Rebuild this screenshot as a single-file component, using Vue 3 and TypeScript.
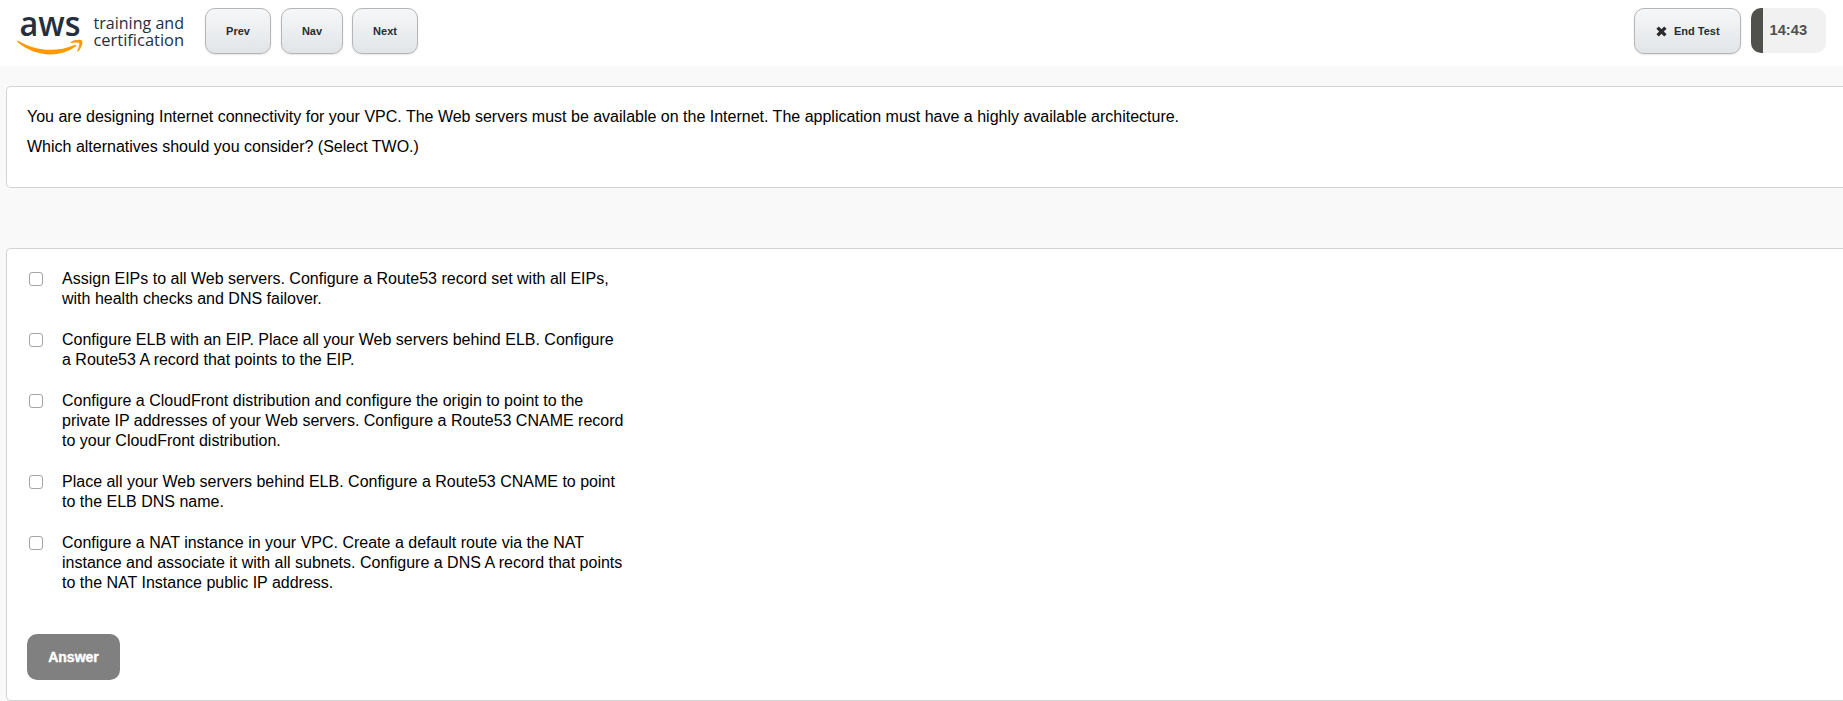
<script setup lang="ts">
import { ref } from 'vue'

interface Option {
  id: number
  text: string
}

const timeLeft = ref('14:43')
const selected = ref<number[]>([])

const question: string[] = [
  'You are designing Internet connectivity for your VPC. The Web servers must be available on the Internet. The application must have a highly available architecture.',
  'Which alternatives should you consider? (Select TWO.)',
]

const options: Option[] = [
  { id: 1, text: 'Assign EIPs to all Web servers. Configure a Route53 record set with all EIPs,\nwith health checks and DNS failover.' },
  { id: 2, text: 'Configure ELB with an EIP. Place all your Web servers behind ELB. Configure\na Route53 A record that points to the EIP.' },
  { id: 3, text: 'Configure a CloudFront distribution and configure the origin to point to the\nprivate IP addresses of your Web servers. Configure a Route53 CNAME record\nto your CloudFront distribution.' },
  { id: 4, text: 'Place all your Web servers behind ELB. Configure a Route53 CNAME to point\nto the ELB DNS name.' },
  { id: 5, text: 'Configure a NAT instance in your VPC. Create a default route via the NAT\ninstance and associate it with all subnets. Configure a DNS A record that points\nto the NAT Instance public IP address.' },
]
</script>

<template>
  <div class="page">
    <header class="bar">
      <svg class="logo" width="190" height="66" viewBox="0 0 190 66" role="img" aria-label="aws training and certification">
        <text class="logo-aws" x="19.5" y="35.6" textLength="61" lengthAdjust="spacingAndGlyphs">aws</text>
        <path fill="#f90" d="M17.3 41.8C17 41 17.9 40.4 18.8 41C28 46.4 39 49.8 50.5 49.8C58.5 49.8 67 48.1 74.6 44.9C75.8 44.4 76.8 45.7 75.6 46.6C68.6 51.8 59 54.5 50.5 54.5C38 54.5 26.5 50 17.3 41.8Z" />
        <path fill="#f90" d="M70.7 42.3C74.5 39.5 80.8 39.4 82 40.6C83.2 42 81.5 48.7 78.1 51.5C77.5 52 77 51.6 77.3 51C78.2 48.8 79.9 44.3 79.1 43.2C78.3 42.2 73.7 42.7 71.5 43C70.8 43.1 70.3 42.7 70.7 42.3Z" />
        <text class="logo-sub" x="93.5" y="28.7" textLength="90.5" lengthAdjust="spacingAndGlyphs">training and</text>
        <text class="logo-sub" x="93.5" y="46" textLength="90.5" lengthAdjust="spacingAndGlyphs">certification</text>
      </svg>
      <nav class="nav">
        <button class="btn prev" type="button">Prev</button>
        <button class="btn middle" type="button">Nav</button>
        <button class="btn next" type="button">Next</button>
      </nav>
      <button class="btn end" type="button">
        <svg class="cross" width="11" height="11" viewBox="0 0 11 11" aria-hidden="true">
          <path d="M1.6 1.6L9.4 9.4M9.4 1.6L1.6 9.4" stroke="#2b2b2b" stroke-width="3.4" />
        </svg>
        <span>End Test</span>
      </button>
      <div class="timer"><span>{{ timeLeft }}</span></div>
    </header>

    <section class="card question">
      <p v-for="line in question" :key="line">{{ line }}</p>
    </section>

    <section class="card answers">
      <label v-for="option in options" :key="option.id" class="option">
        <input v-model="selected" class="box" type="checkbox" :value="option.id" />
        <span class="label">{{ option.text }}</span>
      </label>
      <button class="submit" type="button">Answer</button>
    </section>
  </div>
</template>

<style>
body {
  margin: 0;
  background: #f9f9f9;
  overflow: hidden;
}
</style>

<style scoped>
.page {
  height: 701px;
  overflow: hidden;
  background: #f9f9f9;
  color: #000;
  font-family: "Liberation Sans", Arial, sans-serif;
  font-size: 16px;
}
.bar {
  display: flex;
  align-items: flex-start;
  box-sizing: border-box;
  height: 66px;
  padding-right: 17px;
  background: #fff;
}
.logo {
  display: block;
  flex: none;
  overflow: visible;
}
.logo-aws {
  font: 600 35px "Open Sans", sans-serif;
  fill: #252f3e;
}
.logo-sub {
  font: 400 16.5px "Open Sans", sans-serif;
  fill: #252f3e;
}
.nav {
  display: flex;
  flex: 1;
  padding: 8px 0 0 15px;
}
.btn {
  box-sizing: border-box;
  height: 46px;
  padding: 0;
  border: 1px solid #b5b5b5;
  border-radius: 10px;
  background: linear-gradient(#f6f7f8, #e1e5e8);
  box-shadow: 0 1px 2px rgba(0, 0, 0, 0.1);
  color: #2b2b2b;
  font: bold 11px "Liberation Sans", Arial, sans-serif;
}
.prev,
.next {
  width: 66px;
}
.middle {
  width: 62px;
  margin: 0 9px 0 10px;
}
.end {
  display: flex;
  align-items: center;
  gap: 7px;
  width: 107px;
  margin: 8px 10px 0 0;
  padding-left: 21px;
}
.cross {
  flex: none;
  margin-top: 1px;
}
.timer {
  display: flex;
  align-items: center;
  box-sizing: border-box;
  width: 75px;
  height: 45px;
  margin-top: 8px;
  padding: 0 0 2px 18.5px;
  border-radius: 10px;
  background: linear-gradient(to right, #50504d 12px, #f1f1f1 12px);
  color: #50504d;
  font-size: 14.7px;
  font-weight: bold;
}
.card {
  box-sizing: border-box;
  margin-left: 6px;
  border: 1px solid #d3d3d3;
  border-right: 0;
  border-radius: 5px 0 0 5px;
  background: #fff;
}
.question {
  height: 102px;
  margin-top: 20px;
  padding: 15px 0 0 20px;
}
.question p {
  margin: 0;
  line-height: 30px;
  white-space: nowrap;
}
.answers {
  height: 453px;
  margin-top: 60px;
  padding: 20px 0 0 20px;
}
.option {
  display: flex;
  align-items: flex-start;
  margin-bottom: 21px;
}
.box {
  appearance: none;
  box-sizing: border-box;
  flex: none;
  width: 14px;
  height: 14px;
  margin: 3px 19px 0 2px;
  border: 1px solid #a6a6a6;
  border-radius: 3px;
  background: #fff;
}
.label {
  line-height: 20px;
  white-space: pre;
}
.submit {
  display: block;
  width: 93px;
  height: 46px;
  margin-top: 41px;
  padding: 0;
  border: 0;
  border-radius: 10px;
  background: #808080;
  color: #fff;
  font: bold 14px "Liberation Sans", Arial, sans-serif;
  -webkit-text-stroke: 0.4px #fff;
}
</style>
